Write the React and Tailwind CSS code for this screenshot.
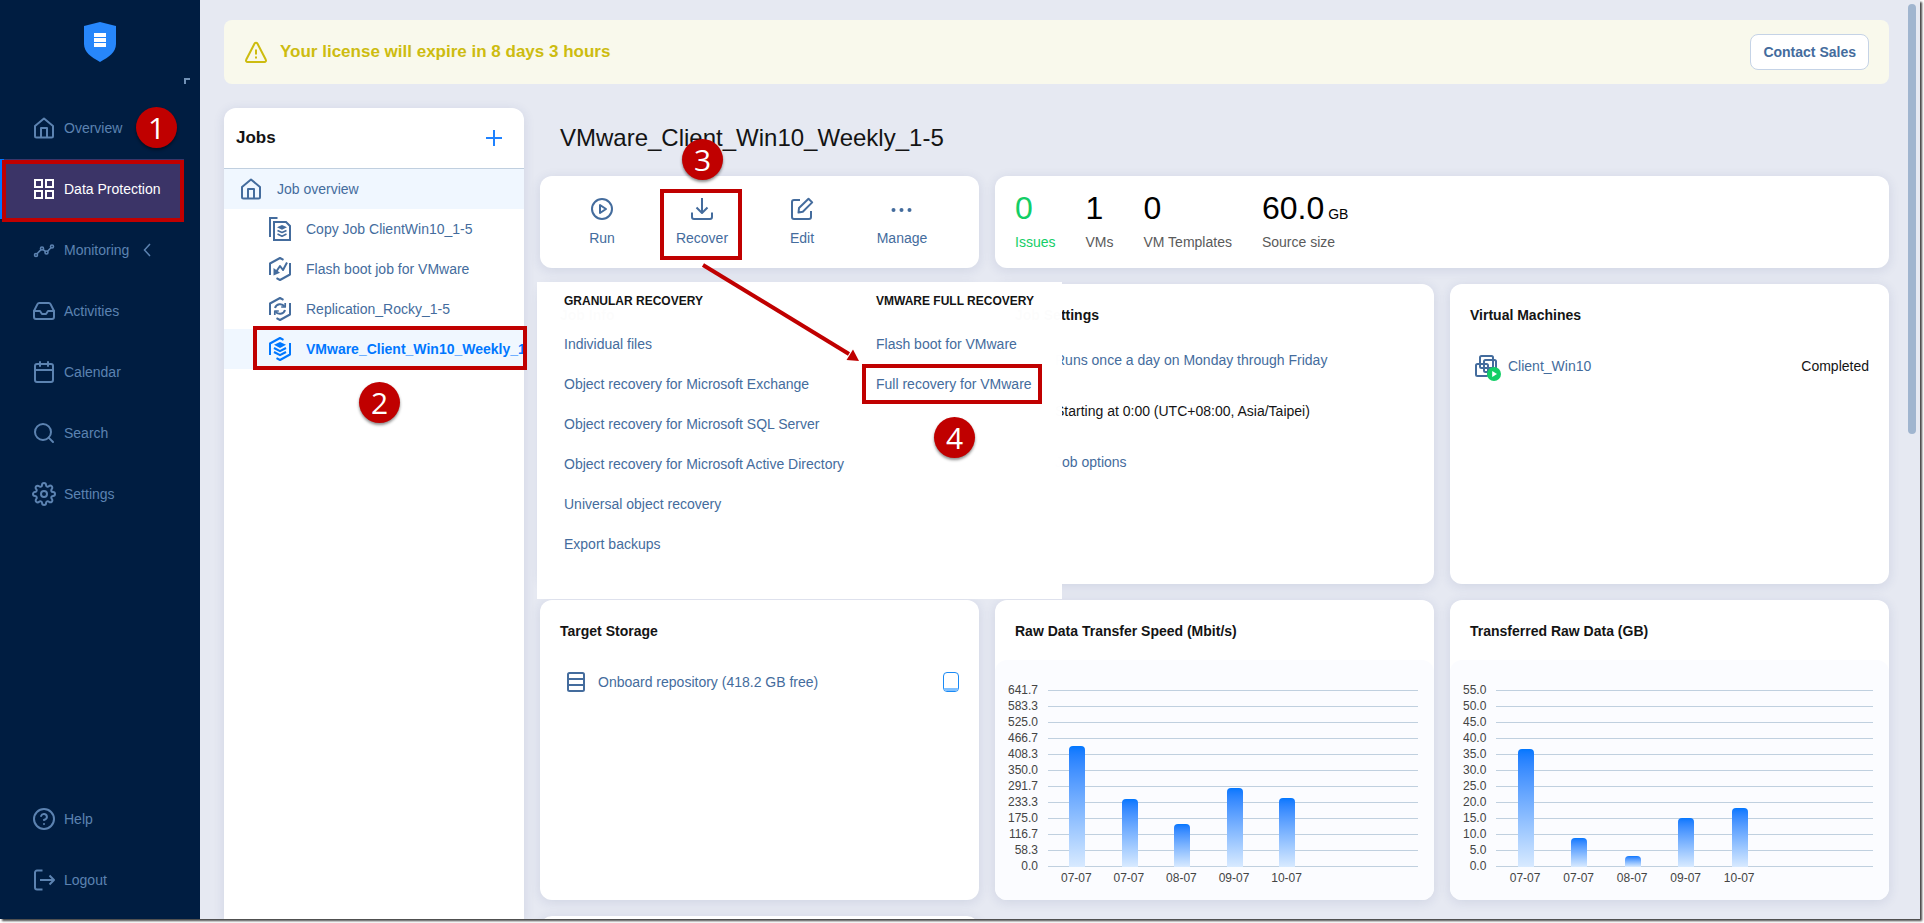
// App.jsx

// React
import { useState } from 'react';

// Icons
import { FiCalendar, FiHelpCircle, FiInbox, FiSearch, FiSettings } from 'react-icons/fi';

// Base for the line icons
function LineIcon({ children, className = 'h-6 w-6' }) {
  return (
    <svg
      viewBox="0 0 24 24"
      fill="none"
      stroke="currentColor"
      strokeWidth="2"
      strokeLinejoin="round"
      className={`shrink-0 ${className}`}
      aria-hidden="true"
    >
      {children}
    </svg>
  );
}

const HomeIcon = () => (
  <LineIcon>
    <path d="M3 10l9-7.5 9 7.5v10a1.5 1.5 0 0 1-1.5 1.5h-15A1.5 1.5 0 0 1 3 20z" />
    <path d="M9 21v-9h6v9" />
  </LineIcon>
);

const GridIcon = () => (
  <LineIcon>
    <path strokeLinejoin="miter" d="M3 3h7v7H3zM14 3h7v7h-7zM3 14h7v7H3zM14 14h7v7h-7z" />
  </LineIcon>
);

const MonitoringIcon = () => (
  <LineIcon>
    <g strokeWidth="1.6">
      <circle cx="4" cy="17" r="1.5" />
      <circle cx="10" cy="10.5" r="1.5" />
      <circle cx="14.5" cy="14.5" r="1.5" />
      <circle cx="20" cy="8.5" r="1.5" />
      <path d="M5 15.8l4-4.2M11.2 11.6l2.2 1.8M15.6 13.3l3.3-3.6" />
    </g>
  </LineIcon>
);

const LogoutIcon = () => (
  <LineIcon>
    <path d="M10.5 2.5H5a2 2 0 0 0-2 2v15a2 2 0 0 0 2 2h5.5M8 12h14M17.5 7.5L22 12l-4.5 4.5" />
  </LineIcon>
);

const RunIcon = () => (
  <LineIcon>
    <circle cx="12" cy="12" r="10" />
    <path d="M10 8v8l6-4z" />
  </LineIcon>
);

const RecoverIcon = () => (
  <LineIcon>
    <path d="M12 1v15M6.5 10.5L12 16l5.5-5.5M2 15.5V20a2 2 0 0 0 2 2h16a2 2 0 0 0 2-2v-4.5" />
  </LineIcon>
);

const EditIcon = () => (
  <LineIcon>
    <path d="M10 3H4a2 2 0 0 0-2 2v15a2 2 0 0 0 2 2h15a2 2 0 0 0 2-2v-6" />
    <path d="M8.5 15.5l.5-4.5 9.5-9.3 3.7 3.7-9.4 9.4z" />
  </LineIcon>
);

const ManageIcon = () => (
  <LineIcon>
    <g fill="currentColor" stroke="none">
      <circle cx="3.5" cy="13" r="2" />
      <circle cx="11.5" cy="13" r="2" />
      <circle cx="19.5" cy="13" r="2" />
    </g>
  </LineIcon>
);

const CopyJobIcon = () => (
  <LineIcon>
    <g strokeLinejoin="miter">
      <path d="M9.5 1H2v19" />
      <path d="M6 5h12l4 4v14H6z" />
    </g>
    <path fill="currentColor" stroke="none" d="M14 8l5 2.3-5 2.5-5-2.5z" />
    <path strokeWidth="1.6" d="M9.5 13.5l4.5 2 4.5-2M9.5 17l4.5 2.2 4.5-2.2" />
  </LineIcon>
);

// Hexagon outline shared by the job icons
const HexIcon = ({ children }) => (
  <LineIcon>
    <path d="M2 18V6.5L12 1l3.5 1.9M22 6v11.5L12 23l-3.5-1.9" />
    {children}
  </LineIcon>
);

const FlashIcon = () => (
  <HexIcon>
    <path d="M19 5.5l-4 7.5-3-4-4 6" />
    <path fill="currentColor" stroke="none" d="M5.5 18.5V11l6.5 4.7z" />
  </HexIcon>
);

const ReplicationIcon = () => (
  <HexIcon>
    <path d="M7 11a5.3 5.3 0 0 1 9.5-1.5M17 13a5.3 5.3 0 0 1-9.5 1.5" />
    <path d="M17.2 6v4h-4M6.8 18v-4h4" strokeWidth="1.7" />
  </HexIcon>
);

const BackupIcon = () => (
  <HexIcon>
    <path fill="currentColor" stroke="none" d="M12 5l6 2.7-6 3.3-6-3.3z" />
    <path d="M6 11l6 3.2 6-3.2M6 15l6 3.2 6-3.2" />
  </HexIcon>
);

const VmIcon = () => (
  <svg viewBox="0 0 27 27" fill="none" className="h-[27px] w-[27px] shrink-0" aria-hidden="true">
    <g stroke="#446c9d" strokeWidth="2">
      <rect x="5" y="1" width="13" height="12" rx="1.5" />
      <rect x="9" y="5" width="12" height="12" rx="1.5" />
      <rect x="1" y="9" width="12" height="12" rx="1.5" />
    </g>
    <circle cx="19" cy="19" r="7" fill="#13ce66" />
    <path d="M17.2 16v6l4.8-3z" fill="#fff" />
  </svg>
);

// Data
const navItems = [
  { label: 'Overview', icon: HomeIcon, step: 1 },
  { label: 'Data Protection', icon: GridIcon, active: true },
  { label: 'Monitoring', icon: MonitoringIcon, collapsible: true },
  { label: 'Activities', icon: FiInbox },
  { label: 'Calendar', icon: FiCalendar },
  { label: 'Search', icon: FiSearch },
  { label: 'Settings', icon: FiSettings },
];

const footerItems = [
  { label: 'Help', icon: FiHelpCircle },
  { label: 'Logout', icon: LogoutIcon },
];

const jobs = [
  { name: 'Copy Job ClientWin10_1-5', icon: CopyJobIcon },
  { name: 'Flash boot job for VMware', icon: FlashIcon },
  { name: 'Replication_Rocky_1-5', icon: ReplicationIcon },
  { name: 'VMware_Client_Win10_Weekly_1-5', icon: BackupIcon },
];

const granularItems = [
  'Individual files',
  'Object recovery for Microsoft Exchange',
  'Object recovery for Microsoft SQL Server',
  'Object recovery for Microsoft Active Directory',
  'Universal object recovery',
  'Export backups',
];

const stats = [
  { value: '0', label: 'Issues', good: true },
  { value: '1', label: 'VMs' },
  { value: '0', label: 'VM Templates' },
  { value: '60.0', unit: 'GB', label: 'Source size' },
];

const speedTicks = ['641.7', '583.3', '525.0', '466.7', '408.3', '350.0', '291.7', '233.3', '175.0', '116.7', '58.3', '0.0'];
const speedBars = [
  { day: '07-07', value: 438 },
  { day: '07-07', value: 245 },
  { day: '08-07', value: 157 },
  { day: '09-07', value: 285 },
  { day: '10-07', value: 252 },
];

const dataTicks = ['55.0', '50.0', '45.0', '40.0', '35.0', '30.0', '25.0', '20.0', '15.0', '10.0', '5.0', '0.0'];
const dataBars = [
  { day: '07-07', value: 36.6 },
  { day: '07-07', value: 9.1 },
  { day: '08-07', value: 3.5 },
  { day: '09-07', value: 15.3 },
  { day: '10-07', value: 18.2 },
];

// Numbered step marker
function Step({ number, className }) {
  return (
    <span
      className={`absolute z-30 flex h-[41px] w-[41px] items-center justify-center rounded-full bg-[#c00000] font-['Open_Sans',sans-serif] text-[30px] leading-none text-white shadow-[0_2px_3px_rgba(0,0,0,0.45)] ${className}`}
    >
      {number}
    </span>
  );
}

// Red frame around a control
function Frame({ className }) {
  return <span className={`pointer-events-none absolute z-20 border-4 border-[#c00000] ${className}`} />;
}

function NavItem({ label, icon: Icon, active, collapsible, step }) {
  return (
    <li className="relative">
      <a
        href="#"
        className={`flex h-[60px] items-center gap-2 border-l-4 pl-7 ${
          active ? 'mr-4 border-[#0077ff] bg-[#3b3467] text-white' : 'border-transparent text-[#5c83b1]'
        }`}
      >
        <Icon className="h-6 w-6 shrink-0" />
        {label}
        {collapsible && (
          <svg viewBox="0 0 8 14" fill="none" stroke="currentColor" strokeWidth="1.5" className="ml-1.5 h-3.5 w-2">
            <path d="M7 1L1.5 7 7 13" />
          </svg>
        )}
      </a>
      {active && <Frame className="-bottom-[3px] left-0.5 right-4 top-px" />}
      {step && <Step number={step} className="left-[136px] top-[9px]" />}
    </li>
  );
}

function Sidebar() {
  return (
    <aside className="flex w-[200px] shrink-0 flex-col bg-[#001d41]">
      <div className="flex h-[98px] shrink-0 flex-col items-center justify-between pb-3.5 pt-[22px]">
        <svg viewBox="0 0 32 40" className="h-10 w-8" role="img" aria-label="Logo">
          <path d="M16 0l16 4v18c0 8-7 13-16 18C7 35 0 30 0 22V4z" fill="#2787fb" />
          <path d="M10 11h12v4H10zM10 16h12v4H10zM10 21h12v4H10z" fill="#fff" />
        </svg>
        <span className="mr-2.5 h-1.5 w-1.5 self-end border-l-2 border-t-2 border-[#7191b5]" />
      </div>
      <ul className="flex flex-1 flex-col gap-px">
        {navItems.map((item) => (
          <NavItem key={item.label} {...item} />
        ))}
      </ul>
      <ul className="flex flex-col gap-px pb-[9px]">
        {footerItems.map((item) => (
          <NavItem key={item.label} {...item} />
        ))}
      </ul>
    </aside>
  );
}

function JobsPanel({ selected, onSelect }) {
  return (
    <section className="flex w-[300px] shrink-0 flex-col rounded-t-xl bg-white shadow-[0_2px_12px_rgba(40,60,120,0.12)]">
      <div className="flex h-[61px] shrink-0 items-center justify-between border-b border-[#c0cfdf] pl-3 pr-[22px]">
        <h2 className="text-[17px] font-bold text-[#141414]">Jobs</h2>
        <button type="button" aria-label="Create job">
          <svg viewBox="0 0 16 16" className="h-4 w-4" stroke="#1f82ff" strokeWidth="2">
            <path d="M8 0v16M0 8h16" />
          </svg>
        </button>
      </div>
      <a href="#" className="flex h-10 items-center gap-3.5 bg-[#f0f7ff] pl-[15px] text-[#446c9d]">
        <HomeIcon />
        Job overview
      </a>
      <ul>
        {jobs.map(({ name, icon: Icon }) => {
          const active = name === selected;

          return (
            <li key={name} className="relative">
              <button
                type="button"
                onClick={() => onSelect(name)}
                className={`flex h-10 w-full items-center gap-3.5 pl-11 text-left ${
                  active ? 'bg-[#f0f7ff] font-bold text-[#0077ff]' : 'text-[#446c9d]'
                }`}
              >
                <Icon />
                <span className="min-w-0 flex-1 overflow-hidden whitespace-nowrap">{name}</span>
              </button>
              {active && <Frame className="-bottom-px -right-[3px] -top-[3px] left-[29px]" />}
              {active && <Step number={2} className="left-[135px] top-[53px]" />}
            </li>
          );
        })}
      </ul>
    </section>
  );
}

function Card({ title, className = '', children }) {
  return (
    <section className={`rounded-xl bg-white shadow-[0_2px_12px_rgba(40,60,120,0.12)] ${className}`}>
      {title && <h3 className="px-5 pt-[21px] font-bold leading-5 text-[#141414]">{title}</h3>}
      {children}
    </section>
  );
}

function ActionButton({ label, icon: Icon, onClick }) {
  return (
    <button type="button" onClick={onClick} className="flex w-[100px] flex-col items-center gap-[7px] pt-[21px]">
      <Icon />
      {label}
    </button>
  );
}

function RecoverMenu() {
  return (
    <div className="absolute -left-[3px] top-[106px] z-10 flex h-[317px] w-[525px] gap-[33px] bg-white/99 pl-[27px] pt-[9px] text-[#446c9d]">
      <div className="w-[279px]">
        <h4 className="h-[35px] text-xs font-bold leading-5 text-[#141414]">GRANULAR RECOVERY</h4>
        <ul>
          {granularItems.map((item) => (
            <li key={item} className="h-10 whitespace-nowrap leading-9">
              <a href="#">{item}</a>
            </li>
          ))}
        </ul>
      </div>
      <div>
        <h4 className="h-[35px] text-xs font-bold leading-5 text-[#141414]">VMWARE FULL RECOVERY</h4>
        <ul>
          <li className="h-10 leading-9">
            <a href="#">Flash boot for VMware</a>
          </li>
          <li className="relative h-10 leading-9">
            <a href="#">Full recovery for VMware</a>
            <Frame className="-left-3.5 -right-2 -top-0.5 h-10" />
            <Step number={4} className="left-[58px] top-[51px]" />
          </li>
        </ul>
      </div>
    </div>
  );
}

function BarChart({ ticks, bars }) {
  const max = parseFloat(ticks[0]);

  return (
    <div className="mt-[19px] flex h-60 gap-2.5 rounded-xl bg-[#fbfcff] pl-[13px] pr-4 pt-[22px] text-xs text-[#444]">
      {/* Y axis */}
      <ul className="text-right">
        {ticks.map((tick) => (
          <li key={tick} className="h-4 leading-4">{tick}</li>
        ))}
      </ul>
      {/* Plot */}
      <div className="flex-1 pt-2">
        <div className="relative">
          {ticks.slice(1).map((tick) => (
            <div key={tick} className="h-4 border-t border-[#c0d0df]" />
          ))}
          <div className="border-t border-[#c0d0df]" />
          <div className="absolute inset-0 grid grid-cols-7 items-end justify-items-center pl-[3px]">
            {bars.map((bar, i) => (
              <div
                key={i}
                className="w-4 rounded-t bg-linear-to-b from-[#0077ff] to-[#d8eaff]"
                style={{ height: `${(bar.value / max) * 100}%` }}
              />
            ))}
          </div>
        </div>
        {/* X axis */}
        <div className="grid grid-cols-7 pl-0.5 pt-[3px] text-center leading-4">
          {bars.map((bar, i) => (
            <span key={i}>{bar.day}</span>
          ))}
        </div>
      </div>
    </div>
  );
}

export default function App() {
  // State
  const [selectedJob, setSelectedJob] = useState('VMware_Client_Win10_Weekly_1-5');
  const [menuOpen, setMenuOpen] = useState(true);

  return (
    <div className="h-screen overflow-hidden bg-white pb-1 pr-1 font-['Liberation_Sans',Arial,sans-serif] text-sm">
      <div className="flex h-full bg-[#e6e9f2] shadow-[2px_2px_2px_#444]">
        <Sidebar />

        <main className="flex min-w-0 flex-1 flex-col overflow-hidden pl-6 pr-[19px] pt-5">
          {/* License banner */}
          <div className="flex h-16 shrink-0 items-center rounded-lg bg-[#f9f9ec] px-5">
            <svg viewBox="0 0 24 24" fill="none" stroke="#cdbc10" strokeWidth="2" className="h-6 w-6" aria-hidden="true">
              <path strokeLinejoin="round" d="M10.6 3.500L2.300 19.500A1.600 1.600 0 0 0 3.700 22h16.600a1.600 1.600 0 0 0 1.400-2.500L13.400 3.500a1.600 1.600 0 0 0-2.800 0zM12 9.500v5M12 16.500v2" />
            </svg>
            <p className="flex-1 pl-3 text-[17px] font-bold text-[#cdbc10]">Your license will expire in 8 days 3 hours</p>
            <button type="button" className="h-9 rounded-lg border border-[#c5d3e6] bg-white px-3 font-bold text-[#446c9d]">
              Contact Sales
            </button>
          </div>

          <div className="flex min-h-0 flex-1 gap-4 pt-6">
            <JobsPanel selected={selectedJob} onSelect={setSelectedJob} />

            <div className="min-w-0 flex-1">
              <h1 className="h-[68px] pl-5 text-2xl leading-[60px] text-[#141414]">{selectedJob}</h1>

              <div className="grid grid-cols-3 gap-4">
                {/* Actions */}
                <Card className="relative h-[92px]">
                  <div className="flex px-3 text-[#446c9d]">
                    <ActionButton label="Run" icon={RunIcon} />
                    <ActionButton label="Recover" icon={RecoverIcon} onClick={() => setMenuOpen(!menuOpen)} />
                    <ActionButton label="Edit" icon={EditIcon} />
                    <ActionButton label="Manage" icon={ManageIcon} />
                  </div>
                  {menuOpen && <RecoverMenu />}
                  <Frame className="left-[120px] top-[13px] h-[71px] w-[82px]" />
                  <Step number={3} className="-top-[37px] left-[142px]" />
                  <svg viewBox="0 0 160 100" className="pointer-events-none absolute left-[161px] top-[87px] z-20 h-[100px] w-40" aria-hidden="true">
                    <path d="M2 2L148 91" stroke="#c00000" strokeWidth="4" />
                    <path d="M158 98l-12.500-1 6.500-10.500z" fill="#c00000" />
                  </svg>
                </Card>

                {/* Stats */}
                <Card className="col-span-2 flex h-[92px] gap-[30px] pl-5 pt-2.5">
                  {stats.map(({ value, unit, label, good }) => (
                    <div key={label} className={good ? 'text-[#13ce66]' : 'text-black'}>
                      <p className="h-11 text-[32px] leading-[44px]">
                        {value}
                        {unit && <span className="pl-1 text-sm">{unit}</span>}
                      </p>
                      <p className={`leading-6 ${good ? '' : 'text-[#5a5a5a]'}`}>{label}</p>
                    </div>
                  ))}
                </Card>

                {/* Details */}
                <Card title="Job Info" className="h-[300px]" />
                <Card title="Job Settings" className="h-[300px]">
                  <ul className="flex flex-col gap-[31px] pl-[60px] pt-[25px] leading-5 text-[#446c9d]">
                    <li><a href="#">Runs once a day on Monday through Friday</a></li>
                    <li className="text-[#141414]">Starting at 0:00 (UTC+08:00, Asia/Taipei)</li>
                    <li><a href="#">Job options</a></li>
                  </ul>
                </Card>
                <Card title="Virtual Machines" className="h-[300px]">
                  <div className="flex h-[82px] items-center pl-[25px] pr-5">
                    <span className="pt-1"><VmIcon /></span>
                    <a href="#" className="flex-1 pl-1.5 text-[#446c9d]">Client_Win10</a>
                    <span className="text-[#141414]">Completed</span>
                  </div>
                </Card>

                <Card title="Target Storage" className="h-[300px]">
                  <div className="flex h-[82px] items-center pl-[27px] pr-5">
                    <svg viewBox="0 0 18 20" fill="none" stroke="#446c9d" strokeWidth="2" className="h-5 w-[18px]" aria-hidden="true">
                      <rect x="1" y="1" width="16" height="18" rx="1.5" />
                      <path d="M1 7h16M1 13h16" />
                    </svg>
                    <a href="#" className="flex-1 pl-[13px] text-[#446c9d]">Onboard repository (418.2 GB free)</a>
                    <span className="flex h-5 w-4 flex-col justify-end overflow-hidden rounded border border-[#1b8af5]">
                      <span className="h-[3px] bg-[#7fc0ff]" />
                    </span>
                  </div>
                </Card>
                <Card title="Raw Data Transfer Speed (Mbit/s)" className="h-[300px]">
                  <BarChart ticks={speedTicks} bars={speedBars} />
                </Card>
                <Card title="Transferred Raw Data (GB)" className="h-[300px]">
                  <BarChart ticks={dataTicks} bars={dataBars} />
                </Card>

                <Card className="h-[300px]" />
              </div>
            </div>
          </div>
        </main>

        {/* Scrollbar */}
        <div className="w-3 pr-1 pt-1">
          <div className="h-[47%] rounded-full bg-[#a0b5cf]" />
        </div>
      </div>
    </div>
  );
}
